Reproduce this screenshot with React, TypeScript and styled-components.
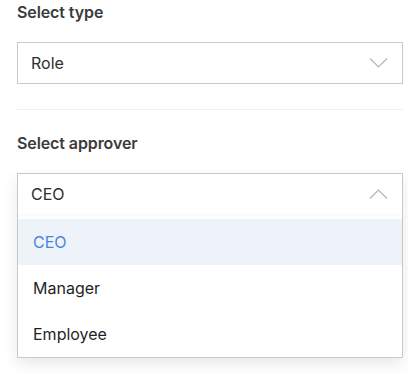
import { FunctionComponent } from "react"
import styled, { createGlobalStyle } from "styled-components"

const GlobalStyle = createGlobalStyle`
  body {
    margin: 0;
    background: #ffffff;
    font-family: "Inter", "Lato", sans-serif;
    overflow: hidden;
  }
`

const options = ["CEO", "Manager", "Employee"]

const Chevron: FunctionComponent<{ up?: boolean }> = ({ up }) => (
  <svg width="19" height="10" viewBox="0 0 19 10" fill="none">
    <path
      d={up ? "M1 9.5 L9.5 1 L18 9.5" : "M1 0.5 L9.5 9 L18 0.5"}
      stroke="#aeb6c6"
      strokeWidth="1.2"
    />
  </svg>
)

const App: FunctionComponent = () => {
  const selected = "CEO"

  return (
    <Page>
      <GlobalStyle />
      <Section>
        <Label>Select type</Label>
        <SelectBox>
          <Header>
            <Value>Role</Value>
            <Chevron />
          </Header>
        </SelectBox>
      </Section>
      <Divider />
      <Section $top={21}>
        <Label>Select approver</Label>
        <SelectBox $open>
          <Header>
            <Value>{selected}</Value>
            <Chevron up />
          </Header>
          <Menu>
            {options.map((opt) => (
              <Option key={opt} $active={opt === selected}>
                {opt}
              </Option>
            ))}
          </Menu>
        </SelectBox>
      </Section>
      <Divider $top={15} />
    </Page>
  )
}

const Page = styled.div`
  width: 386px;
  padding: 0 5px 0 17px;
`

const Section = styled.section<{ $top?: number }>`
  padding-top: ${(p) => p.$top ?? 0}px;
  padding-bottom: 25px;
`

const Label = styled.div`
  font-size: 16px;
  font-weight: 600;
  line-height: 24px;
  color: #3b3b3b;
  letter-spacing: -0.1px;
  margin-bottom: 18px;
`

const SelectBox = styled.div<{ $open?: boolean }>`
  border: 1px solid #c9c9c9;
  background: #fff;
  box-shadow: ${(p) => (p.$open ? "0 6px 14px rgba(0, 0, 0, 0.09)" : "none")};
`

const Header = styled.div`
  height: 40px;
  display: flex;
  align-items: center;
  justify-content: space-between;
  padding: 0 14px 0 13px;
`

const Value = styled.span`
  font-size: 16px;
  color: #2e2e2e;
`

const Menu = styled.div`
  padding-top: 5px;
  box-shadow: inset 0 4px 4px -4px rgba(0, 0, 0, 0.06);
`

const Option = styled.div<{ $active?: boolean }>`
  height: 46px;
  display: flex;
  align-items: center;
  padding-left: 15px;
  font-size: 16px;
  color: ${(p) => (p.$active ? "#4a86dd" : "#1f1f1f")};
  background: ${(p) => (p.$active ? "#eef2f9" : "#fff")};
`

const Divider = styled.hr<{ $top?: number }>`
  margin: ${(p) => p.$top ?? 0}px 0 0;
  border: 0;
  border-top: 1px solid #eeeeee;
`

export default App
